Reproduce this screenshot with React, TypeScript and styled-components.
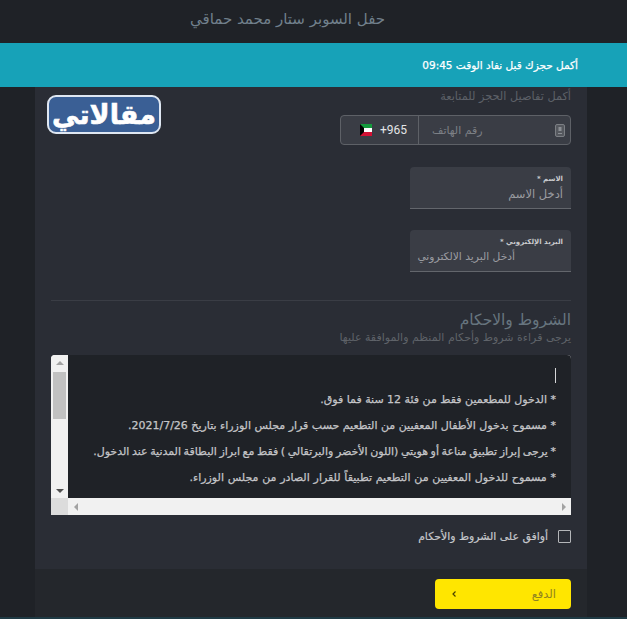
import { FC } from 'react';
import styled, { createGlobalStyle } from 'styled-components';

const GlobalStyle = createGlobalStyle`
  html, body {
    margin: 0;
    padding: 0;
    height: 619px;
    overflow: hidden;
    background: #1f2227;
  }
  * { box-sizing: border-box; }
`;

const Page = styled.div`
  position: relative;
  width: 627px;
  height: 619px;
  direction: rtl;
  font-family: "DejaVu Sans", sans-serif;
  background: #1f2227;
  overflow: hidden;
`;

const Header = styled.header`
  height: 43px;
  padding: 9px 242px 0 0;
  font-size: 15px;
  line-height: 20px;
  color: #71808c;
  white-space: nowrap;
`;

const Banner = styled.div`
  height: 44px;
  padding: 0 49px;
  display: flex;
  align-items: center;
  background: #17a2b8;
  color: #fff;
  font-size: 10.5px;
  -webkit-text-stroke: 0.25px #fff;
`;

const Card = styled.main`
  width: 552px;
  margin-right: 40px;
  background: #2a2d35;
`;

const Body = styled.div`
  height: 482px;
  padding: 2px 16px 0;
`;

const Hint = styled.div`
  font-size: 11.3px;
  line-height: 16px;
  color: #5d6168;
`;

const PhoneBox = styled.div`
  display: flex;
  width: 231px;
  height: 30px;
  margin-top: 10px;
  background: #3a3d45;
  border: 1px solid #5e6167;
  border-radius: 4px;
`;

const PhoneInput = styled.div`
  flex: 1;
  display: flex;
  align-items: center;
  justify-content: space-between;
  padding: 0 5px 0 13px;
  border-left: 1px solid #5e6167;
  font-size: 11px;
  color: #7d8086;
`;

const CountryCode = styled.div`
  width: 77px;
  display: flex;
  align-items: center;
  gap: 8px;
  padding-left: 19px;
  direction: ltr;
  color: #e4e5e7;
  font-family: Roboto, sans-serif;
  font-size: 12px;
`;

const Field = styled.div<{ $top: number }>`
  width: 161px;
  height: 42px;
  margin-top: ${(props) => props.$top}px;
  padding: 7px 8px 0;
  background: #3a3d45;
  border-bottom: 1px solid #63666c;
  border-radius: 4px 4px 0 0;
`;

const FieldLabel = styled.div`
  font-size: 7px;
  line-height: 11px;
  font-weight: 700;
  color: #c9cacd;
`;

const FieldValue = styled.div<{ $indent?: number; $size: number }>`
  padding-right: ${(props) => props.$indent ?? 0}px;
  font-size: ${(props) => props.$size}px;
  line-height: 18px;
  color: #9a9ca1;
  white-space: nowrap;
`;

const Divider = styled.hr`
  height: 1px;
  margin: 28px 0 0;
  border: 0;
  background: #3a3d45;
`;

const TermsTitle = styled.h2`
  margin: 9px 0 0;
  font-size: 15.5px;
  font-weight: 400;
  line-height: 20px;
  color: #67757f;
`;

const TermsHint = styled.div`
  font-size: 11px;
  line-height: 15px;
  color: #5f6369;
`;

const TermsBox = styled.div`
  display: grid;
  grid-template-columns: 17px 1fr;
  grid-template-rows: 143px 17px;
  height: 160px;
  margin-top: 10px;
  direction: ltr;
  background: #f1f1f1;
  border-radius: 4px 4px 0 0;
  overflow: hidden;
`;

const TermsText = styled.div`
  direction: rtl;
  min-width: 0;
  padding: 13px 15px 0 0;
  background: #1f2227;
  overflow: hidden;
`;

const Caret = styled.div`
  width: 1px;
  height: 15px;
  margin-bottom: 4px;
  background: #d5d6d8;
`;

const TermLine = styled.p<{ $squeeze?: number }>`
  margin: 0;
  font-size: 11px;
  line-height: 26px;
  color: #c4c5c8;
  -webkit-text-stroke: 0.25px #c4c5c8;
  word-spacing: ${(props) => props.$squeeze ?? 0}px;
  white-space: nowrap;
`;

const ScrollColumn = styled.div`
  position: relative;
  display: flex;
  flex-direction: column;
  align-items: center;
  justify-content: space-between;
  padding: 6px 0 5px;
  background: #f1f1f1;
`;

const Thumb = styled.div`
  position: absolute;
  top: 17px;
  left: 2px;
  width: 13px;
  height: 47px;
  background: #c1c1c1;
`;

const Arrow = styled.span<{ $dir: 'up' | 'down' | 'left' | 'right'; $dim?: boolean }>`
  width: 0;
  height: 0;
  border: 4px solid transparent;
  ${(props) => {
    const color = props.$dim ? '#a3a3a3' : '#505050';
    switch (props.$dir) {
      case 'up':
        return `border-top: 0; border-bottom: 4px solid ${color};`;
      case 'down':
        return `border-bottom: 0; border-top: 4px solid ${color};`;
      case 'left':
        return `border-left: 0; border-right: 4px solid ${color};`;
      default:
        return `border-right: 0; border-left: 4px solid ${color};`;
    }
  }}
`;

const ScrollCorner = styled.div`
  background: #dcdcdc;
`;

const ScrollRow = styled.div`
  display: flex;
  align-items: center;
  justify-content: space-between;
  padding: 0 5px 0 6px;
  background: #f1f1f1;
`;

const AgreeRow = styled.label`
  display: flex;
  align-items: center;
  gap: 10px;
  margin-top: 15px;
  font-size: 10.9px;
  color: #c6c8cc;
  -webkit-text-stroke: 0.2px #c6c8cc;
`;

const CheckBox = styled.span`
  width: 13px;
  height: 13px;
  border: 1px solid #b4b6b9;
  border-radius: 1px;
`;

const Footer = styled.footer`
  height: 48px;
  padding: 10px 16px;
  background: #24272c;
`;

const BottomEdge = styled.div`
  height: 2px;
  background: #1f3a44;
`;

const PayButton = styled.button`
  width: 136px;
  height: 30px;
  display: flex;
  align-items: center;
  justify-content: space-between;
  padding: 0 15px 0 17px;
  border: 0;
  border-radius: 4px;
  background: #ffe600;
  color: #8f8320;
  font-family: inherit;
  font-size: 11.5px;
`;

const Logo = styled.div`
  position: absolute;
  left: 47px;
  top: 95px;
  width: 114px;
  height: 39px;
  display: flex;
  align-items: center;
  justify-content: center;
  background: #3a5f95;
  border: 2px solid #dfe7f2;
  border-radius: 9px;
  color: #fff;
  font-size: 27px;
  font-weight: 700;
  line-height: 1;
  -webkit-text-stroke: 0.6px #fff;
`;

const PhoneIcon: FC = () => (
  <svg width="10" height="13" viewBox="0 0 10 13">
    <rect x="0.5" y="0.5" width="9" height="12" rx="1.5" fill="#55585e" stroke="#7c7f84" />
    <rect x="3.5" y="3" width="3" height="4" fill="#8c8f94" />
    <rect x="3" y="9" width="4" height="1" fill="#8c8f94" />
  </svg>
);

const KuwaitFlag: FC = () => (
  <svg width="12" height="12" viewBox="0 0 12 12">
    <rect width="12" height="4" fill="#149b3c" />
    <rect y="4" width="12" height="4" fill="#fff" />
    <rect y="8" width="12" height="4" fill="#d21034" />
    <polygon points="0,0 4,4 4,8 0,12" fill="#000" />
  </svg>
);

const Chevron: FC = () => (
  <svg width="4" height="6" viewBox="0 0 4 6">
    <path d="M3.5 0.5 L1 3 L3.5 5.5" fill="none" stroke="#4a4200" strokeWidth="1.2" />
  </svg>
);

const terms = [
  { text: '* الدخول للمطعمين فقط من فئة 12 سنة فما فوق.' },
  { text: '* مسموح بدخول الأطفال المعفيين من التطعيم حسب قرار مجلس الوزراء بتاريخ 2021/7/26.' },
  {
    text: '* يرجى إبراز تطبيق مناعة أو هويتي (اللون الأخضر والبرتقالي ) فقط مع ابراز البطاقة المدنية عند الدخول.',
    squeeze: -0.9,
  },
  { text: '* مسموح للدخول المعفيين من التطعيم تطبيقاً للقرار الصادر من مجلس الوزراء.', squeeze: 0.3 },
];

export default function App() {
  return (
    <Page>
      <GlobalStyle />
      <Header>حفل السوبر ستار محمد حماقي</Header>
      <Banner>أكمل حجزك قبل نفاد الوقت 09:45</Banner>
      <Card>
        <Body>
          <Hint>أكمل تفاصيل الحجز للمتابعة</Hint>
          <PhoneBox>
            <PhoneInput>
              <PhoneIcon />
              <span>رقم الهاتف</span>
            </PhoneInput>
            <CountryCode>
              <KuwaitFlag />
              <span>+965</span>
            </CountryCode>
          </PhoneBox>
          <Field $top={22}>
            <FieldLabel>الاسم *</FieldLabel>
            <FieldValue $size={11.5}>أدخل الاسم</FieldValue>
          </Field>
          <Field $top={21}>
            <FieldLabel>البريد الإلكتروني *</FieldLabel>
            <FieldValue $indent={48} $size={10.7}>أدخل البريد الالكتروني</FieldValue>
          </Field>
          <Divider />
          <TermsTitle>الشروط والاحكام</TermsTitle>
          <TermsHint>يرجى قراءة شروط وأحكام المنظم والموافقة عليها</TermsHint>
          <TermsBox>
            <ScrollColumn>
              <Arrow $dir="up" $dim />
              <Thumb />
              <Arrow $dir="down" />
            </ScrollColumn>
            <TermsText>
              <Caret />
              {terms.map((line) => (
                <TermLine key={line.text} $squeeze={line.squeeze}>{line.text}</TermLine>
              ))}
            </TermsText>
            <ScrollCorner />
            <ScrollRow>
              <Arrow $dir="left" $dim />
              <Arrow $dir="right" $dim />
            </ScrollRow>
          </TermsBox>
          <AgreeRow>
            <CheckBox />
            أوافق على الشروط والأحكام
          </AgreeRow>
        </Body>
        <Footer>
          <PayButton>
            <span>الدفع</span>
            <Chevron />
          </PayButton>
        </Footer>
      </Card>
      <BottomEdge />
      <Logo>مقالاتي</Logo>
    </Page>
  );
}
